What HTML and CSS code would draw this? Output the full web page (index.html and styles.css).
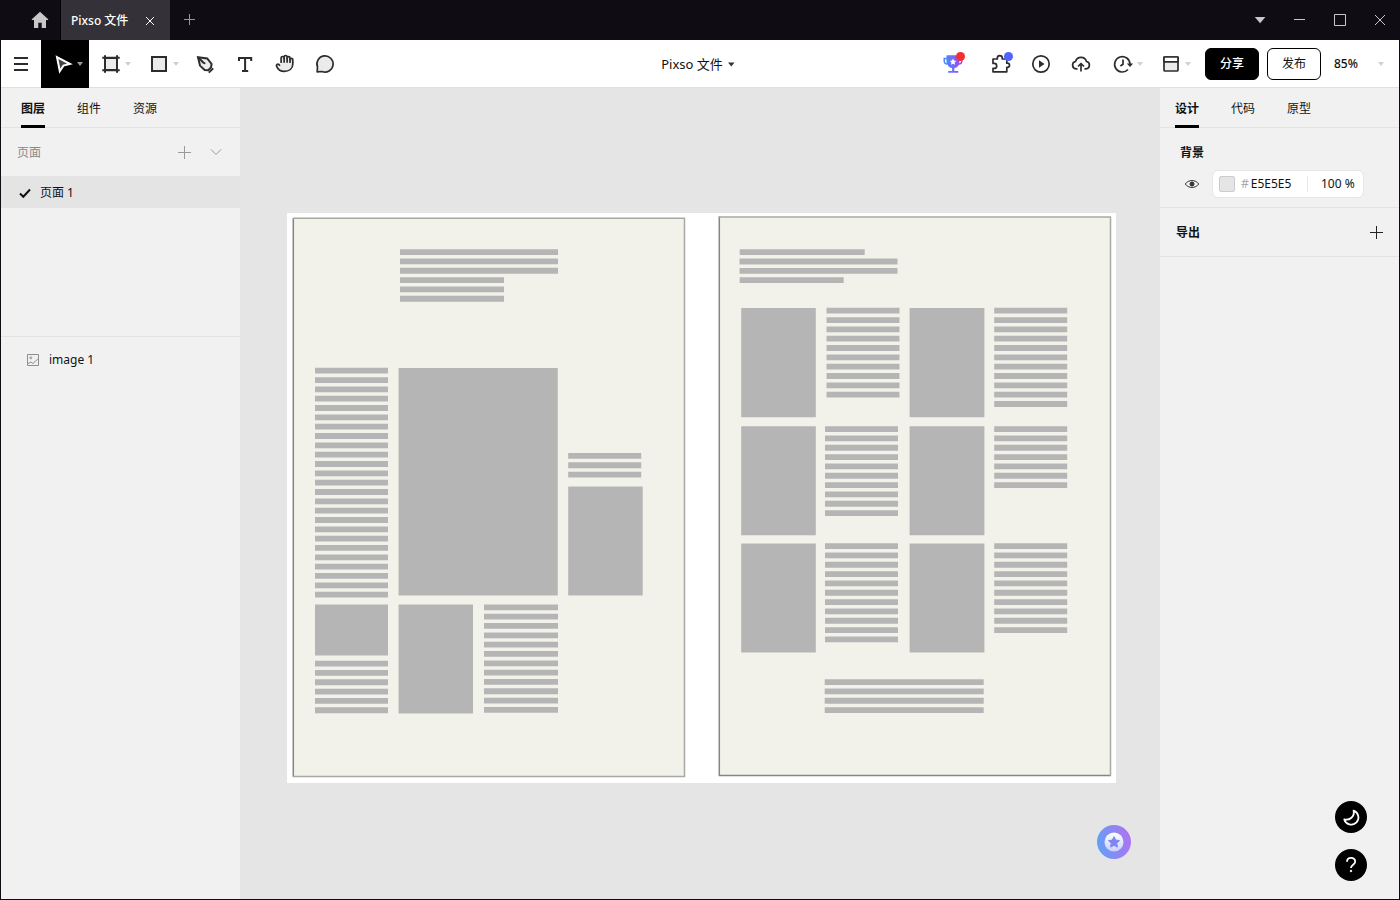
FILE: index.html
```html
<!DOCTYPE html>
<html lang="zh-CN">
<head>
<meta charset="utf-8">
<title>Pixso 文件</title>
<link rel="stylesheet" href="styles.css">
</head>
<body>
<div class="app">
  <header class="titlebar">
    <button class="home" aria-label="主页"><svg class="icon home-icon" viewBox="0 0 24 24"><path d="M12 3.800 3.800 11.200V12H6v8h4.300v-5.200h3.400V20H18v-8h2.200v-.8z"/></svg></button>
    <div class="file-tab">
      <span>Pixso 文件</span>
      <button class="tab-close" aria-label="关闭标签"><svg class="icon" viewBox="0 0 24 24"><path d="m8 8 8 8m0-8-8 8"/></svg></button>
    </div>
    <button class="bar-button" aria-label="新建"><svg class="icon dim" viewBox="0 0 24 24"><path d="M11.500 6v11M6 11.500h11"/></svg></button>
    <div class="window-buttons">
      <button class="bar-button" aria-label="更多"><svg class="icon" viewBox="0 0 24 24"><path class="solid" d="M6.800 9h10.600L12.100 15.200z"/></svg></button>
      <button class="bar-button" aria-label="最小化"><svg class="icon" viewBox="0 0 24 24"><path d="M6 11.500h11"/></svg></button>
      <button class="bar-button" aria-label="最大化"><svg class="icon" viewBox="0 0 24 24"><path d="M6.500 6.500h11v11h-11z"/></svg></button>
      <button class="bar-button" aria-label="关闭"><svg class="icon" viewBox="0 0 24 24"><path d="m7 7 10 10m0-10L7 17"/></svg></button>
    </div>
  </header>

  <div class="workspace">
    <nav class="toolbar" aria-label="工具栏">
      <div class="tools">
        <button class="tool" aria-label="菜单"><svg class="icon" viewBox="0 0 24 24"><path d="M5 6h14M5 12h14M5 18h14"/></svg></button>
        <button class="tool with-caret active" aria-label="移动"><svg class="icon" viewBox="0 0 24 24"><path class="cursor" d="M6 5.200 19 12l-6.600 1.600L8.800 19.200z"/></svg><svg class="caret" viewBox="0 0 8 24"><path d="M1 10h6l-3 4z"/></svg></button>
        <button class="tool with-caret" aria-label="画板"><svg class="icon" viewBox="0 0 24 24"><path class="tint" d="M6 6h12v12H6z"/><path d="M6 3.300v17.400M18 3.300v17.400M3.300 5.800h17.400M3.300 18.200h17.400"/></svg><svg class="caret" viewBox="0 0 8 24"><path d="M1 10h6l-3 4z"/></svg></button>
        <button class="tool with-caret" aria-label="矩形"><svg class="icon" viewBox="0 0 24 24"><path class="tint" d="M5 5h14v14H5z"/></svg><svg class="caret" viewBox="0 0 8 24"><path d="M1 10h6l-3 4z"/></svg></button>
        <button class="tool" aria-label="钢笔"><svg class="icon" viewBox="0 0 24 24"><path class="tint" d="m5 5.200 9.200 1.200 4.400 5.600-.6 3.600-2.800 2.600-3.600-.2-4.600-4.400z"/><path d="m5 5.200 6 6M15.800 20.600l4.400-4.200"/><circle class="solid" cx="11.500" cy="11.300" r="1"/></svg></button>
        <button class="tool" aria-label="文本"><svg class="icon" viewBox="0 0 24 24"><path d="M6 9V6h12.200v3M12.100 6v13M9 19h6.200"/></svg></button>
        <button class="tool" aria-label="抓手"><svg class="icon" viewBox="0 0 24 24"><path class="tint thin" d="M7 13.800 5.900 12.500a1.500 1.500 0 0 0-2.300 1.800c1.400 3.200 3.900 5.100 7.600 5.100 4.900 0 8.600-2.700 8.600-7.400V7.700a1.300 1.300 0 0 0-2.800 0V6a1.400 1.400 0 0 0-2.900 0V5a1.500 1.500 0 0 0-3 0v1a1.500 1.500 0 0 0-3 0v5"/><path class="thin" d="M11.100 6v4.800M14.100 6v4.800M17 7v4"/></svg></button>
        <button class="tool" aria-label="评论"><svg class="icon" viewBox="0 0 24 24"><path class="tint thin" d="M4.200 19.900 4.500 15A8.100 8.100 0 1 1 9 19.500z"/></svg></button>
      </div>

      <button class="file-name">Pixso 文件<svg class="caret" viewBox="0 0 8 24"><path d="M1 10.500h6.500l-3.200 4z"/></svg></button>

      <div class="actions">
        <button class="tool trophy" aria-label="活动">
          <svg class="icon" viewBox="0 0 24 24">
            <defs><linearGradient id="cup" x1="0" x2="1"><stop offset="0" stop-color="#3f92fb"/><stop offset=".55" stop-color="#7668f8"/><stop offset="1" stop-color="#a83df2"/></linearGradient></defs>
            <path fill="url(#cup)" stroke="none" d="M5.500 3.200h13v2.600h3v3.600c0 2-1.500 3.300-3.600 3.300-1 1.800-2.500 3-4.600 3.300v3h4v1.800H7.100V19h4v-3c-2.100-.3-3.700-1.500-4.600-3.300-2.200 0-4-1.300-4-3.300V5.800h3zM4 7.300v2c0 1 .6 1.800 1.700 2-.2-.8-.3-2.500-.2-4zm14.500 0c.1 1.500 0 3.200-.3 4 1.200-.2 1.800-1 1.800-2v-2z"/>
            <path fill="#fff" stroke="none" d="m12 6.500 1 2.100 2.200.3-1.600 1.600.4 2.300-2-1.100-2 1.100.4-2.300-1.600-1.600 2.200-.3z"/>
          </svg><span class="dot red"></span>
        </button>
        <button class="tool" aria-label="插件"><svg class="icon" viewBox="0 0 24 24"><path class="thin" d="M4 7h4.300V6.200a2.500 2.500 0 0 1 5 0V7h4.500v4.200h.6a2.100 2.100 0 0 1 0 4.200h-.6v4.400H4v-3.400h1.200a2.500 2.500 0 0 0 0-5H4z"/></svg><span class="dot blue"></span></button>
        <button class="tool" aria-label="播放"><svg class="icon" viewBox="0 0 24 24"><circle class="thin" cx="12" cy="12" r="8.200"/><path class="solid" d="m10 8.200 5.500 3.800-5.500 3.800z"/></svg></button>
        <button class="tool" aria-label="上传"><svg class="icon" viewBox="0 0 24 24"><path class="thin" d="M8.500 16.800H7a3.700 3.700 0 0 1-.5-7.300 5.700 5.700 0 0 1 11 0 3.700 3.700 0 0 1-.5 7.300h-1.500M12 19.500V12M9 14.500l3-3 3 3"/></svg></button>
        <button class="tool with-caret" aria-label="历史"><svg class="icon" viewBox="0 0 24 24"><path class="thin" d="M17 17.500A7.700 7.700 0 1 1 19 12M12 7.500v4.800l-2.600 1.700"/><path class="solid" d="M15.800 11.500h6.400L19 15z"/></svg><svg class="caret" viewBox="0 0 8 24"><path d="M1 10h6l-3 4z"/></svg></button>
        <button class="tool with-caret" aria-label="布局"><svg class="icon" viewBox="0 0 24 24"><rect class="tint thin" x="5" y="5" width="14" height="14" rx="1"/><path class="thin" fill="#fff" d="M5 5h14v4.800H5z"/></svg><svg class="caret" viewBox="0 0 8 24"><path d="M1 10h6l-3 4z"/></svg></button>
        <button class="pill dark">分享</button>
        <button class="pill">发布</button>
        <button class="zoom-level">85%<svg class="caret" viewBox="0 0 8 24"><path d="M1 10h6l-3 4z"/></svg></button>
      </div>
    </nav>

    <aside class="panel">
      <div class="tabs left-tabs" role="tablist">
        <button class="tab selected" role="tab" aria-selected="true">图层</button>
        <button class="tab" role="tab">组件</button>
        <button class="tab" role="tab">资源</button>
      </div>
      <section class="pages">
        <div class="pages-head">
          <h2>页面</h2>
          <button class="small-button" aria-label="添加页面"><svg class="icon" viewBox="0 0 24 24"><path d="M12.500 6v13M6 12.500h13"/></svg></button>
          <button class="small-button" aria-label="折叠"><svg class="icon" viewBox="0 0 24 24"><path d="m7 9.500 5 5 5-5"/></svg></button>
        </div>
        <button class="page-row"><svg class="check" viewBox="0 0 16 16"><path d="m3 8.500 3.300 3.200L13 4.500"/></svg>页面 1</button>
      </section>
      <button class="layer-row"><svg class="layer-icon" viewBox="0 0 16 16"><path d="M2.500 2.500h11v11h-11z M3 11.500l3-1.500 2 1.500L12.800 7"/><circle cx="5.800" cy="5.800" r="1"/></svg>image 1</button>
    </aside>

    <main class="canvas">
      <svg class="artwork" viewBox="287 213 829 570" role="img" aria-label="image 1">
        <path class="sheet" d="M293 218h392v559H293z"/>
        <path class="edge dark-edge" d="M293.300 218v559"/>
        <path class="edge" d="M293 218.300h392M684.500 218v559M293 776.600h392"/>
        <path class="sheet" d="M719 217h392v559H719z"/>
        <path class="edge dark-edge" d="M719.300 216.500V776M719 775.600h392"/>
        <path class="edge" d="M718.500 217h392.500M1110.500 216.500V776"/>
        <g class="block">
          <path d="M398.600 368H557.800V595.400H398.600z"/>
          <path d="M568.200 486.400H642.700V595.400H568.200z"/>
          <path d="M315 604.400H388V655.400H315z"/>
          <path d="M398.600 604.400H473V713.500H398.600z"/>
          <path d="M741.200 308H815.800V417.200H741.200zM909.600 308H984.400V417.200H909.600z"/>
          <path d="M741.200 426.300H815.800V535.200H741.200zM909.600 426.300H984.400V535.200H909.600z"/>
          <path d="M741.200 543.400H815.800V652.500H741.200zM909.600 543.400H984.400V652.500H909.600z"/>
        </g>
        <g class="lines">
          <path stroke-width="158" d="M479 249.200v25"/>
          <path stroke-width="104" d="M452 277.200v25"/>
          <path stroke-width="73" d="M351.500 367.800v230"/>
          <path stroke-width="73" d="M604.700 453v25"/>
          <path stroke-width="73" d="M351.500 660.700v52.700"/>
          <path stroke-width="74" d="M521 604.400v109"/>
          <path stroke-width="125" d="M802.200 249.200v6"/>
          <path stroke-width="158" d="M818.500 258.600v16"/>
          <path stroke-width="104" d="M791.700 277.200v6"/>
          <path stroke-width="73" d="M863 307.800v90M1030.700 307.800v99.500"/>
          <path stroke-width="73" d="M861.500 426.200v90M1030.700 426.200v62"/>
          <path stroke-width="73" d="M861.500 543.200v99.500M1030.700 543.200v90"/>
          <path stroke-width="159" d="M904.200 679.200v34"/>
        </g>
      </svg>
      <button class="assistant" aria-label="活动助手">
        <svg viewBox="0 0 34 34">
          <defs>
            <linearGradient id="orb" x1="0" y1=".6" x2="1" y2=".4"><stop offset="0" stop-color="#62a0f5"/><stop offset="1" stop-color="#b072f2"/></linearGradient>
            <linearGradient id="disc" x1="0" y1="0" x2="0" y2="1"><stop offset="0" stop-color="#fff"/><stop offset="1" stop-color="#c9d0fa"/></linearGradient>
          </defs>
          <circle cx="17" cy="17" r="17" fill="url(#orb)"/>
          <circle cx="17" cy="17" r="9.500" fill="url(#disc)"/>
          <path d="m17 11.700 1.700 3.400 3.800.5-2.700 2.700.6 3.800-3.400-1.800-3.400 1.800.6-3.800-2.700-2.700 3.800-.5z" fill="#7f86ee" stroke="#7f86ee" stroke-linejoin="round"/>
        </svg>
      </button>
    </main>

    <aside class="panel inspector">
      <div class="tabs right-tabs" role="tablist">
        <button class="tab selected" role="tab" aria-selected="true">设计</button>
        <button class="tab" role="tab">代码</button>
        <button class="tab" role="tab">原型</button>
      </div>
      <section class="background">
        <h2>背景</h2>
        <div class="fill-row">
          <button class="eye" aria-label="显示背景"><svg viewBox="0 0 16 16"><path d="M1.200 8C4.500 3.400 11.500 3.400 14.800 8c-3.300 4.600-10.300 4.600-13.600 0z"/><circle cx="8" cy="8" r="2"/></svg></button>
          <div class="fill-box">
            <button class="swatch" aria-label="颜色"></button>
            <label class="hex"><span>#</span><input type="text" value="E5E5E5" aria-label="颜色值"></label>
            <input class="opacity" type="text" value="100 %" aria-label="不透明度">
          </div>
        </div>
      </section>
      <section class="export">
        <h2>导出</h2>
        <button class="small-button dark-plus" aria-label="添加导出"><svg class="icon" viewBox="0 0 24 24"><path d="M12.500 6v13M6 12.500h13"/></svg></button>
      </section>
      <div class="floating">
        <button class="round" aria-label="深色模式"><svg viewBox="0 0 32 32"><path d="M18.600 9.600A7.200 7.200 0 1 1 9.300 18.400C14.500 19.800 20 15.500 18.600 9.600z"/></svg></button>
        <button class="round" aria-label="帮助"><svg viewBox="0 0 32 32"><path d="M12 12.700c0-5 8.200-5 8.200-.2 0 3.200-4.200 3.200-4.200 6.500"/><circle cx="16" cy="22" r=".8"/></svg></button>
      </div>
    </aside>
  </div>
</div>
</body>
</html>
```
FILE: styles.css
```css
* { box-sizing: border-box; }

body {
  margin: 0;
  font: 12px/16px "Noto Sans", "Noto Sans CJK SC", sans-serif;
  color: #111;
}

button {
  margin: 0;
  padding: 0;
  border: 0;
  background: none;
  color: inherit;
  font: inherit;
}

h2 {
  margin: 0;
  font-size: 12px;
  font-weight: 600;
}

svg { display: block; flex: none; }

.icon {
  width: 24px;
  height: 24px;
  fill: none;
  stroke: currentColor;
}

.app {
  display: flex;
  flex-direction: column;
  height: 100vh;
  background: #0f0c13;
}

/* Title bar */
.titlebar {
  display: flex;
  align-items: stretch;
  flex: none;
  height: 40px;
  color: #c8c8ca;
}

.home {
  display: flex;
  align-items: center;
  justify-content: flex-end;
  width: 61px;
  padding-right: 8px;
  border-right: 1px solid #000;
}

.home-icon path, .solid { fill: currentColor; }
.home-icon path { stroke: none; }
.solid { stroke: none; }

.file-tab {
  display: flex;
  align-items: center;
  gap: 10px;
  width: 109px;
  padding: 1px 0 0 10px;
  background: #343238;
  color: #fff;
  font-weight: 500;
}

.bar-button {
  display: grid;
  place-items: center;
  width: 40px;
}

.dim { color: #98969b; }

.window-buttons {
  display: flex;
  margin-left: auto;
}

/* Editor */
.workspace {
  display: grid;
  grid-template: 48px minmax(0, 1fr) / 239px minmax(0, 1fr) 239px;
  flex: 1;
  min-height: 0;
  margin: 0 1px 1px;
}

.toolbar {
  display: grid;
  grid-column: 1 / -1;
  grid-template-columns: 1fr auto 1fr;
  background: #fff;
  box-shadow: inset 0 -1px #e0e0e0;
}

.tools, .actions { display: flex; }

.actions {
  align-items: center;
  justify-content: flex-end;
}

.tool {
  position: relative;
  display: flex;
  align-items: center;
  justify-content: center;
  width: 40px;
  height: 48px;
  color: #2c2c2c;
}

.tool .icon { stroke-width: 2; }
.tool .thin { stroke-width: 1.7; stroke-linejoin: round; }
.tool .solid { stroke: none; }
.tint { fill: #ebebeb; }
.trophy { margin-right: 8px; }

.with-caret {
  justify-content: flex-start;
  gap: 1px;
  width: 48px;
  padding-left: 10px;
}

.caret {
  width: 8px;
  height: 24px;
  fill: #d0d0d0;
}

.active { background: #000; color: #fff; }
.active .caret { fill: #999; }
.cursor { fill: #444; stroke-linejoin: miter; }

.dot {
  position: absolute;
  top: 12px;
  right: 8px;
  width: 9px;
  height: 9px;
  border-radius: 50%;
}

.red { background: #f22e35; }
.blue { background: #5262ff; }

.file-name {
  display: flex;
  align-items: center;
  gap: 4px;
  padding-right: 4px;
  font-size: 13px;
}

.file-name .caret { fill: #333; }

.pill {
  width: 54px;
  height: 32px;
  margin-left: 8px;
  border: 1px solid #000;
  border-radius: 6px;
}

.dark { background: #000; color: #fff; font-weight: 500; }

.zoom-level {
  display: flex;
  align-items: center;
  justify-content: space-between;
  width: 78px;
  padding: 0 14px 0 13px;
  font-weight: 500;
}

/* Side panels */
.panel {
  position: relative;
  display: flex;
  flex-direction: column;
  min-height: 0;
  background: #f1f1f1;
}

.tabs {
  display: flex;
  gap: 32px;
  height: 40px;
  border-bottom: 1px solid #e3e3e3;
}

.left-tabs { padding-left: 20px; }
.right-tabs { padding-left: 15px; }

.tab {
  height: 40px;
  border-bottom: 3px solid transparent;
  padding-top: 4px;
}

.selected { border-color: #000; font-weight: 700; }

.pages {
  height: 209px;
  border-bottom: 1px solid #e3e3e3;
}

.pages-head {
  display: flex;
  align-items: center;
  gap: 8px;
  height: 48px;
  padding: 0 12px 0 16px;
  color: #888;
}

.pages-head h2 {
  margin-right: auto;
  padding-top: 2px;
  font-weight: 400;
}

.small-button { color: #999; }

.page-row, .layer-row {
  display: flex;
  align-items: center;
  width: 100%;
  height: 32px;
  text-align: left;
}

.page-row {
  gap: 7px;
  padding: 1px 0 0 16px;
  background: #e4e4e4;
}

.check {
  width: 16px;
  height: 16px;
  fill: none;
  stroke: #111;
  stroke-width: 2;
}

.layer-row {
  gap: 8px;
  margin-top: 7px;
  padding-left: 24px;
}

.layer-icon {
  width: 16px;
  height: 16px;
  fill: none;
  stroke: #8e8e8e;
}

/* Canvas */
.canvas {
  position: relative;
  display: grid;
  place-items: center;
  min-width: 0;
  padding: 9px 0 0 3px;
  overflow: hidden;
  background: #e5e5e5;
}

/* Artwork at the current zoom level */
.artwork {
  width: 829px;
  background: #fff;
}

.sheet { fill: #f2f2ea; }
.edge { fill: none; stroke: #a8a9a2; stroke-width: 1.5; }
.dark-edge { stroke: #85867f; }
.block { fill: #b5b5b5; }
.lines { fill: none; stroke: #b5b5b5; stroke-dasharray: 5.8 3.53; }

.assistant {
  position: absolute;
  right: 29px;
  bottom: 40px;
  width: 34px;
  height: 34px;
}

/* Inspector */
.background {
  height: 80px;
  padding: 17px 19px 0;
  border-bottom: 1px solid #e3e3e3;
}

.background h2 { padding-left: 1px; }

.fill-row {
  display: flex;
  align-items: center;
  gap: 12px;
  margin-top: 9px;
  padding-left: 5px;
}

.eye svg {
  width: 16px;
  height: 16px;
  fill: none;
  stroke: #333;
}

.eye circle { fill: #333; }

.fill-box {
  display: flex;
  align-items: center;
  width: 152px;
  height: 28px;
  padding-left: 6px;
  border: 1px solid #e6e6e6;
  border-radius: 6px;
  background: #fff;
}

.swatch {
  width: 16px;
  height: 16px;
  margin-right: 6px;
  border: 1px solid #ccc;
  border-radius: 2px;
  background: #e5e5e5;
}

.hex {
  display: flex;
  gap: 2px;
  width: 67px;
  border-right: 1px solid #e6e6e6;
  color: #aaa;
}

.fill-box input {
  min-width: 0;
  padding: 0;
  border: 0;
  background: none;
  color: #111;
  font: inherit;
}

.hex input { width: 50px; }

.fill-box .opacity {
  width: 54px;
  padding-left: 13px;
}

.export {
  display: flex;
  align-items: center;
  justify-content: space-between;
  height: 49px;
  padding: 0 11px 0 16px;
  border-bottom: 1px solid #e3e3e3;
}

.export h2 { padding-top: 2px; }

.dark-plus { color: #222; }

.floating {
  position: absolute;
  right: 32px;
  bottom: 18px;
  display: grid;
  gap: 16px;
}

.round {
  width: 32px;
  height: 32px;
  border-radius: 50%;
  background: #000;
}

.round svg {
  fill: none;
  stroke: #fff;
  stroke-width: 1.8;
  stroke-linejoin: round;
}

.round circle { fill: #fff; stroke-width: 1; }
```
